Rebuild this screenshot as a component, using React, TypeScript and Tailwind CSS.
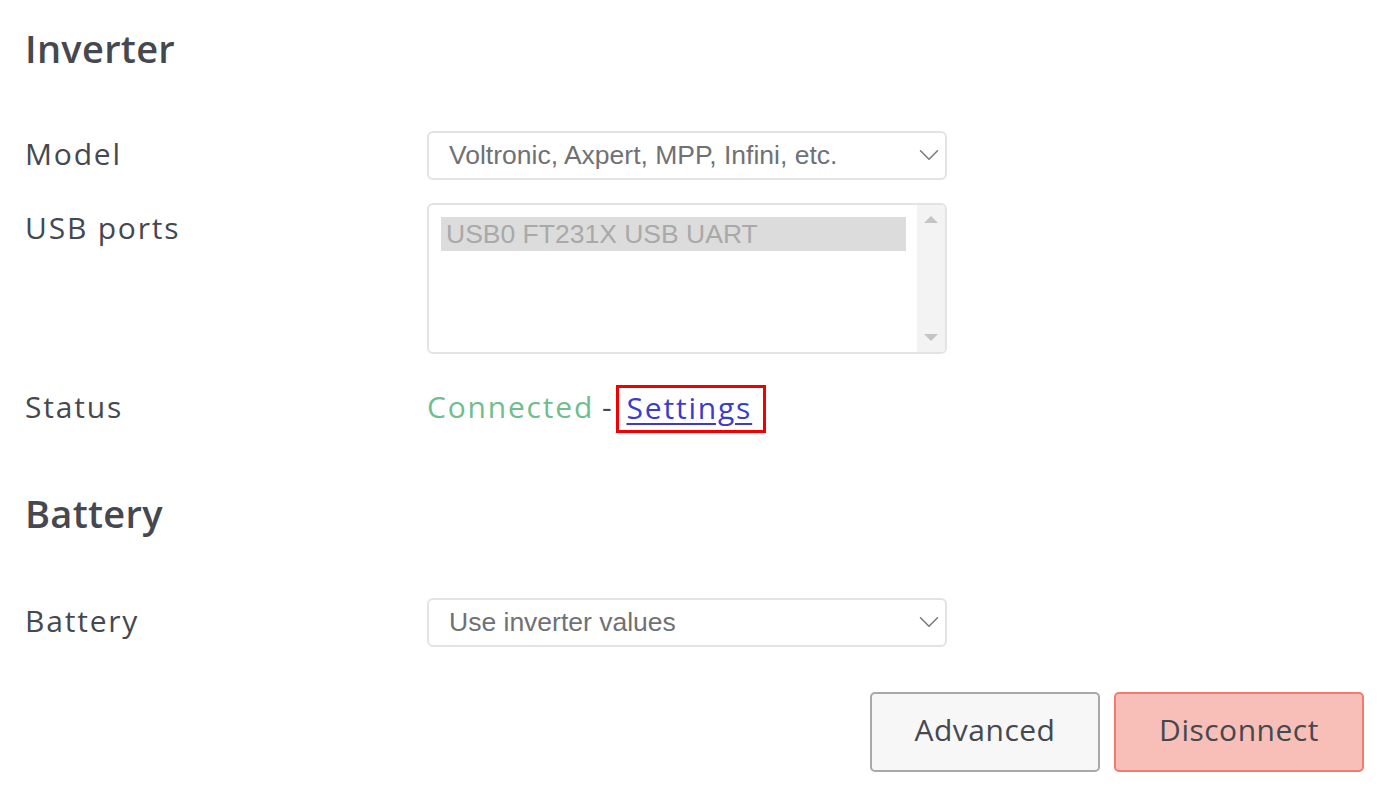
import { ChevronDown } from "lucide-react";

const font = { fontFamily: '"Open Sans", "DejaVu Sans", sans-serif' };

function FakeSelect({ value }: { value: string }) {
    return (
        <div className="relative w-[520px] h-[49px] border-2 border-[#e3e3e3] rounded-[6px] bg-white flex items-center pl-[20px] text-[26.5px] text-[#6f7175] font-['Liberation_Sans',Arial,sans-serif]">
            {value}
            <ChevronDown className="absolute right-[-1px] top-[5px] w-[34px] h-[34px] text-[#7a7a7a]" strokeWidth={1.1} />
        </div>
    );
}

export default function App() {
    return (
        <div className="min-h-screen bg-white text-[#45484f] pl-[25px] pr-[22px]" style={font}>
            <h2 className="text-[38px] font-semibold leading-none pt-[29px] tracking-[0.3px]">Inverter</h2>

            <div className="flex items-center mt-[64px]">
                <label className="w-[402px] text-[30px] tracking-[1.8px] pb-[4px]">Model</label>
                <FakeSelect value="Voltronic, Axpert, MPP, Infini, etc." />
            </div>

            <div className="flex items-start mt-[23px]">
                <label className="w-[402px] text-[30px] tracking-[1.8px] pt-[2px]">USB ports</label>
                <div className="w-[520px] h-[151px] border-2 border-[#e3e3e3] rounded-[6px] bg-white flex overflow-hidden">
                    <div className="flex-1 pl-[12px] pt-[12px] pr-[11px]">
                        <div className="h-[34px] bg-[#dcdcdc] pl-[5px] text-[26.5px] leading-[34px] text-[#a9a9a9] font-['Liberation_Sans',Arial,sans-serif]">
                            USB0 FT231X USB UART
                        </div>
                    </div>
                    <div className="w-[28px] bg-[#f3f3f3] flex flex-col items-center justify-between py-[11px]">
                        <div className="w-0 h-0 border-l-[7px] border-r-[7px] border-b-[7px] border-l-transparent border-r-transparent border-b-[#c4c4c4]" />
                        <div className="w-0 h-0 border-l-[7px] border-r-[7px] border-t-[7px] border-l-transparent border-r-transparent border-t-[#c4c4c4]" />
                    </div>
                </div>
            </div>

            <div className="flex items-center mt-[30px]">
                <label className="w-[402px] text-[30px] tracking-[1.8px] pb-[4px]">Status</label>
                <div className="flex items-center text-[30px] tracking-[1.8px]">
                    <span className="text-[#70bd8d] pb-[4px]">Connected</span>
                    <span className="ml-[8px] mr-[2px] pb-[4px]">-</span>
                    <a href="#" className="border-[3px] border-[#f20000] pl-[8px] pr-[11px] pb-[3px] h-[48px] flex items-center text-[#3a3ccc] underline underline-offset-[4px] decoration-2">
                        Settings
                    </a>
                </div>
            </div>

            <h2 className="text-[38px] font-semibold leading-none mt-[61px] tracking-[0.3px]">Battery</h2>

            <div className="flex items-center mt-[66px]">
                <label className="w-[402px] text-[30px] tracking-[1.8px] pb-[4px]">Battery</label>
                <FakeSelect value="Use inverter values" />
            </div>

            <div className="flex justify-end gap-[14px] mt-[45px]">
                <button className="w-[230px] h-[80px] border-2 border-[#a9a9a9] rounded-[5px] bg-[#f7f7f7] text-[30px] tracking-[0.5px] text-[#45484f] pb-[5px]">
                    Advanced
                </button>
                <button className="w-[250px] h-[80px] border-2 border-[#ef7c6f] rounded-[5px] bg-[#f7bfb8] text-[30px] tracking-[0.5px] text-[#45484f] pb-[5px]">
                    Disconnect
                </button>
            </div>
        </div>
    );
}
